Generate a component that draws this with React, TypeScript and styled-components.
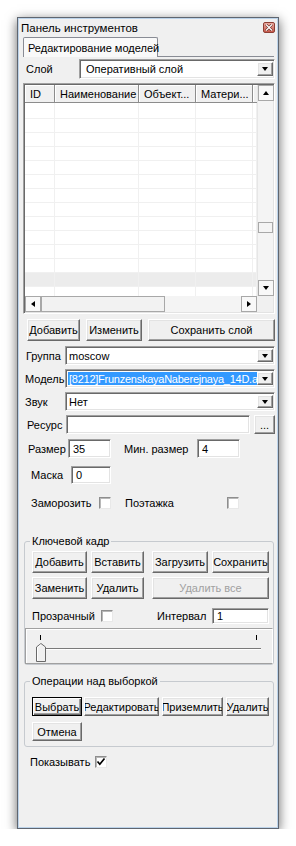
import React from "react";
import styled, { createGlobalStyle, css } from "styled-components";

const GlobalStyle = createGlobalStyle`
  html, body {
    margin: 0;
    padding: 0;
    background: #fff;
  }
  body {
    font-family: "Liberation Sans", Arial, sans-serif;
    font-size: 11px;
    color: #000;
  }
  * {
    box-sizing: border-box;
  }
`;

/**
 * Shared borders
 */
const sunken = css`
  border: 1px solid;
  border-color: #a0a0a0 #fff #fff #a0a0a0;
  box-shadow: inset 1px 1px 0 #696969, inset -1px -1px 0 #e3e3e3;
`;

const raised = css`
  border: 1px solid;
  border-color: #fff #696969 #696969 #fff;
  box-shadow: inset -1px -1px 0 #a0a0a0, inset 1px 1px 0 #e3e3e3;
  background: #f0f0f0;
`;

type Dir = "up" | "down" | "left" | "right";

const arrowShapes: Record<Dir, string> = {
  up: "border-width: 0 3.5px 4px 3.5px; border-color: transparent transparent #000 transparent;",
  down: "border-width: 4px 3.5px 0 3.5px; border-color: #000 transparent transparent transparent;",
  left: "border-width: 3.5px 4px 3.5px 0; border-color: transparent #000 transparent transparent;",
  right: "border-width: 3.5px 0 3.5px 4px; border-color: transparent transparent transparent #000;",
};

const columns = ["ID", "Наименование", "Объект...", "Матери...", ""];
const rowHeights = [16, 14, 14, 14, 14, 14, 14, 14, 14, 14, 14, 14, 14, 14];

export default function App() {
  return (
    <>
      <GlobalStyle />
      <Page>
        <Window>
          <TitleBar>
            <Title>Панель инструментов</Title>
            <CloseButton>
              <svg width="8" height="7" viewBox="0 0 8 7">
                <path d="M1 0.5 L7 6.5 M7 0.5 L1 6.5" stroke="#5a1f18" strokeWidth="2.4" />
                <path d="M1 0.5 L7 6.5 M7 0.5 L1 6.5" stroke="#fff" strokeWidth="1.3" />
              </svg>
            </CloseButton>
          </TitleBar>

          <Body>
            <TabStrip>
              <Tab>Редактирование моделей</Tab>
              <TabLine />
            </TabStrip>

            <Row $h={20} $mt={2}>
              <Label $w={56} $pl={3}>Слой</Label>
              <Combo>
                <ComboText $pl={4}>Оперативный слой</ComboText>
                <DropButton>
                  <Arrow $dir="down" />
                </DropButton>
              </Combo>
            </Row>

            <TableFrame>
              <TableArea>
                <GridRow $h={18}>
                  {columns.map((c, i) => (
                    <HeaderCell key={i}>{c}</HeaderCell>
                  ))}
                </GridRow>
                {rowHeights.map((h, r) => (
                  <GridRow key={r} $h={h} $gray={r === 12}>
                    {columns.map((_, i) => (
                      <Cell key={i} />
                    ))}
                  </GridRow>
                ))}
              </TableArea>
              <VScroll>
                <ScrollBtn>
                  <Arrow $dir="up" />
                </ScrollBtn>
                <VTrack>
                  <VThumb />
                </VTrack>
                <ScrollBtn>
                  <Arrow $dir="down" />
                </ScrollBtn>
              </VScroll>
              <HScroll>
                <ScrollBtn>
                  <Arrow $dir="left" />
                </ScrollBtn>
                <HThumb />
                <HTrack />
                <ScrollBtn>
                  <Arrow $dir="right" />
                </ScrollBtn>
              </HScroll>
              <Corner />
            </TableFrame>

            <Row $h={22} $mt={5} $pl={4} $gap={6}>
              <Button $w={53}>Добавить</Button>
              <Button $w={56}>Изменить</Button>
              <Button $grow>Сохранить слой</Button>
            </Row>

            <FormRows>
              <Row $h={19}>
                <Label $w={42} $pl={3}>Группа</Label>
                <Combo>
                  <ComboText $pl={1}>moscow</ComboText>
                  <DropButton>
                    <Arrow $dir="down" />
                  </DropButton>
                </Combo>
              </Row>
              <Row $h={19}>
                <Label $w={42} $pl={2}>Модель</Label>
                <Combo>
                  <ComboText $pl={1} $selected>
                    [8212]FrunzenskayaNaberejnaya_14D.am
                  </ComboText>
                  <DropButton>
                    <Arrow $dir="down" />
                  </DropButton>
                </Combo>
              </Row>
              <Row $h={19}>
                <Label $w={42} $pl={2}>Звук</Label>
                <Combo>
                  <ComboText $pl={1}>Нет</ComboText>
                  <DropButton>
                    <Arrow $dir="down" />
                  </DropButton>
                </Combo>
              </Row>
              <Row $h={19} $gap={4}>
                <Label $w={39} $pl={4}>Ресурс</Label>
                <Field $grow />
                <Button $w={21}>...</Button>
              </Row>
            </FormRows>

            <Row $h={19} $mt={5} $pl={5}>
              <Label $w={40}>Размер</Label>
              <Field $w={43}>35</Field>
              <Label $w={73} $ml={13}>Мин. размер</Label>
              <Field $w={43}>4</Field>
            </Row>

            <Row $h={18} $mt={8} $pl={8}>
              <Label $w={40}>Маска</Label>
              <Field $w={40}>0</Field>
            </Row>

            <Row $h={12} $mt={13} $pl={8}>
              <Label $w={68}>Заморозить</Label>
              <CheckBox />
              <Label $w={102} $ml={14}>Поэтажка</Label>
              <CheckBox />
            </Row>

            <GroupBox $mt={26} $pb={0}>
              <Legend>Ключевой кадр</Legend>
              <KeyGrid>
                <Button>Добавить</Button>
                <Button>Вставить</Button>
                <Button $col="4">Загрузить</Button>
                <Button $col="5">Сохранить</Button>
                <Button>Заменить</Button>
                <Button>Удалить</Button>
                <Button $col="4 / 6" disabled>
                  Удалить все
                </Button>
              </KeyGrid>
              <Row $h={16} $mt={9} $pl={7}>
                <Label $w={69}>Прозрачный</Label>
                <CheckBox />
                <Label $w={55} $ml={44}>Интервал</Label>
                <Field $w={57}>1</Field>
              </Row>
              <SliderBox>
                <Ticks>
                  <Tick />
                  <Tick />
                </Ticks>
                <Groove />
                <Thumb>
                  <svg width="10" height="19" viewBox="0 0 10 19">
                    <path d="M0.5 18.5 V4 L5 0.5 L9.5 4 V18.5 Z" fill="#f0f0f0" stroke="#696969" />
                    <path d="M1.5 17.5 V4.4 L5 1.7" fill="none" stroke="#fff" />
                  </svg>
                </Thumb>
              </SliderBox>
            </GroupBox>

            <GroupBox $mt={10} $pb={5}>
              <Legend>Операции над выборкой</Legend>
              <Row $h={19} $mt={9} $pl={7}>
                <Button $w={50} $default>
                  Выбрать
                </Button>
                <Button $w={75} $ml={2}>
                  Редактировать
                </Button>
                <Button $w={61} $ml={3}>
                  Приземлить
                </Button>
                <Button $w={43} $ml={3}>
                  Удалить
                </Button>
              </Row>
              <Row $h={19} $mt={6} $pl={7}>
                <Button $w={50}>Отмена</Button>
              </Row>
            </GroupBox>

            <Row $h={12} $mt={9} $pl={7}>
              <Label $w={65}>Показывать</Label>
              <CheckBox>
                <svg width="10" height="10" viewBox="0 0 10 10">
                  <path d="M1.5 4.5 L3.8 7.2 L8.5 1.5" fill="none" stroke="#000" strokeWidth="1.7" />
                </svg>
              </CheckBox>
            </Row>
          </Body>
        </Window>
      </Page>
    </>
  );
}

/**
 * Styles
 */
const Page = styled.div`
  padding: 17px 0 0 17px;
`;

const Window = styled.div`
  width: 262px;
  height: 812px;
  background: #f0f0f0;
  border: 1px solid #5f6670;
  box-shadow: inset 0 0 0 1px #bcd3ea, 0 3px 11px rgba(0, 0, 0, 0.6);
  display: flex;
  flex-direction: column;
`;

const TitleBar = styled.div`
  height: 19px;
  display: flex;
  align-items: center;
  justify-content: space-between;
  padding: 0 3px 0 3px;
`;

const Title = styled.span`
  font-size: 11.5px;
`;

const CloseButton = styled.span`
  width: 12px;
  height: 11px;
  border: 1px solid #8e3e34;
  border-radius: 2px;
  background: linear-gradient(#eaa99f, #c65a4c);
  display: flex;
  align-items: center;
  justify-content: center;
`;

const Body = styled.div`
  flex: 1;
  display: flex;
  flex-direction: column;
  padding: 0 3px 0 5px;
`;

const TabStrip = styled.div`
  display: flex;
  height: 20px;
`;

const Tab = styled.div`
  width: 135px;
  border: 1px solid #898c95;
  border-bottom: none;
  border-radius: 2px 2px 0 0;
  background: #f9f9f9;
  padding-left: 4px;
  display: flex;
  align-items: center;
  white-space: nowrap;
`;

const TabLine = styled.div`
  flex: 1;
  border-bottom: 1px solid #898c95;
  margin-right: 1px;
`;

const Row = styled.div<{ $h: number; $mt?: number; $pl?: number; $gap?: number }>`
  display: flex;
  align-items: center;
  height: ${({ $h }) => $h}px;
  margin-top: ${({ $mt }) => $mt ?? 0}px;
  padding-left: ${({ $pl }) => $pl ?? 0}px;
  gap: ${({ $gap }) => $gap ?? 0}px;
  flex-shrink: 0;
`;

const FormRows = styled.div`
  display: flex;
  flex-direction: column;
  gap: 4px;
  margin-top: 5px;
`;

const Label = styled.span<{ $w: number; $pl?: number; $ml?: number }>`
  width: ${({ $w }) => $w}px;
  padding-left: ${({ $pl }) => $pl ?? 0}px;
  margin-left: ${({ $ml }) => $ml ?? 0}px;
  flex-shrink: 0;
  white-space: nowrap;
`;

const Combo = styled.div`
  ${sunken};
  flex: 1;
  height: 100%;
  background: #fff;
  display: flex;
  padding: 2px 1px 2px 2px;
  min-width: 0;
`;

const ComboText = styled.div<{ $pl: number; $selected?: boolean }>`
  flex: 1;
  min-width: 0;
  overflow: hidden;
  white-space: nowrap;
  display: flex;
  align-items: center;
  padding-left: ${({ $pl }) => $pl}px;
  ${({ $selected }) =>
    $selected &&
    css`
      background: #3399ff;
      color: #fff;
      letter-spacing: -0.25px;
    `}
`;

const DropButton = styled.div`
  ${raised};
  width: 16px;
  flex-shrink: 0;
  display: flex;
  align-items: center;
  justify-content: center;
`;

const Arrow = styled.span<{ $dir: Dir }>`
  width: 0;
  height: 0;
  border-style: solid;
  ${({ $dir }) => arrowShapes[$dir]}
`;

const Field = styled.div<{ $w?: number; $grow?: boolean }>`
  ${sunken};
  background: #fff;
  height: 100%;
  width: ${({ $w }) => ($w ? `${$w}px` : "auto")};
  flex: ${({ $grow }) => ($grow ? 1 : "none")};
  display: flex;
  align-items: center;
  padding-left: 4px;
  white-space: nowrap;
`;

const TableFrame = styled.div`
  ${sunken};
  margin-top: 4px;
  height: 231px;
  padding: 1px;
  background: #fff;
  display: grid;
  grid-template-columns: 1fr 16px;
  grid-template-rows: 1fr 16px;
  flex-shrink: 0;
`;

const TableArea = styled.div`
  overflow: hidden;
  display: flex;
  flex-direction: column;
`;

const GridRow = styled.div<{ $h: number; $gray?: boolean }>`
  display: grid;
  grid-template-columns: 30px 84px 57px 57px 1fr;
  height: ${({ $h }) => $h}px;
  flex-shrink: 0;
  background: ${({ $gray }) => ($gray ? "#ececec" : "#fff")};
`;

const HeaderCell = styled.div`
  background: #f0f0f0;
  border-right: 1px solid #8c8c8c;
  border-bottom: 1px solid #8c8c8c;
  box-shadow: inset 1px 1px 0 #fff;
  padding-left: 5px;
  display: flex;
  align-items: center;
  white-space: nowrap;
  overflow: hidden;
`;

const Cell = styled.div`
  border-right: 1px solid #f0f0f0;
  border-bottom: 1px solid #f0f0f0;
`;

const VScroll = styled.div`
  display: flex;
  flex-direction: column;
  background: #f4f4f4;
  border-left: 1px solid #e6e6e6;
`;

const ScrollBtn = styled.div`
  width: 16px;
  height: 16px;
  flex-shrink: 0;
  border: 1px solid #a8a8a8;
  background: #f8f8f8;
  display: flex;
  align-items: center;
  justify-content: center;
`;

const VTrack = styled.div`
  flex: 1;
`;

const VThumb = styled.div`
  margin-top: 121px;
  height: 11px;
  border: 1px solid #a8a8a8;
  background: #f4f4f4;
`;

const HScroll = styled.div`
  display: flex;
  background: #f4f4f4;
`;

const HThumb = styled.div`
  width: 124px;
  border: 1px solid #a8a8a8;
  background: #f2f2f2;
`;

const HTrack = styled.div`
  flex: 1;
`;

const Corner = styled.div`
  background: #f0f0f0;
`;

const Button = styled.button<{
  $w?: number;
  $grow?: boolean;
  $ml?: number;
  $col?: string;
  $default?: boolean;
}>`
  ${raised};
  font: inherit;
  color: #000;
  height: 100%;
  padding: 0;
  margin: 0 0 0 ${({ $ml }) => $ml ?? 0}px;
  width: ${({ $w }) => ($w ? `${$w}px` : "auto")};
  flex: ${({ $grow }) => ($grow ? 1 : "none")};
  grid-column: ${({ $col }) => $col ?? "auto"};
  display: flex;
  align-items: center;
  justify-content: center;
  white-space: nowrap;
  overflow: hidden;
  &:disabled {
    color: #a0a0a0;
  }
  ${({ $default }) =>
    $default &&
    css`
      border-color: #000;
      box-shadow: inset 1px 1px 0 #fff, inset -1px -1px 0 #696969,
        inset -2px -2px 0 #a0a0a0;
    `}
`;

const CheckBox = styled.span`
  width: 12px;
  height: 12px;
  flex-shrink: 0;
  border: 1px solid;
  border-color: #8e8e8e #e8e8e8 #e8e8e8 #8e8e8e;
  box-shadow: inset 1px 1px 0 #b8b8b8;
  background: #fff;
  display: flex;
  align-items: center;
  justify-content: center;
`;

const GroupBox = styled.fieldset<{ $mt: number; $pb: number }>`
  margin: ${({ $mt }) => $mt}px 1px 0 1px;
  padding: 0 0 ${({ $pb }) => $pb}px 0;
  border: 1px solid #c6cacf;
  border-radius: 3px;
  min-width: 0;
  display: flex;
  flex-direction: column;
`;

const Legend = styled.legend`
  margin-left: 5px;
  padding: 0 2px;
  line-height: 13px;
`;

const KeyGrid = styled.div`
  display: grid;
  grid-template-columns: 55px 53px 0 56px 57px;
  grid-auto-rows: 22px;
  column-gap: 4px;
  row-gap: 4px;
  margin-top: 3px;
  padding-left: 7px;
`;

const SliderBox = styled.div`
  position: relative;
  margin-top: 4px;
  height: 36px;
  border: 1px solid;
  border-color: #a0a0a0 #fff #a0a0a0 #a0a0a0;
  box-shadow: inset 1px 1px 0 #fff;
`;

const Ticks = styled.div`
  display: flex;
  justify-content: space-between;
  padding: 0 15px 0 14px;
  margin-top: 6px;
`;

const Tick = styled.span`
  width: 1px;
  height: 5px;
  background: #000;
`;

const Groove = styled.div`
  margin: 8px 11px 0 17px;
  height: 2px;
  border-top: 1px solid #7a7a7a;
  border-bottom: 1px solid #fff;
`;

const Thumb = styled.div`
  position: absolute;
  left: 10px;
  top: 14px;
  width: 10px;
  height: 19px;
  display: flex;
`;
